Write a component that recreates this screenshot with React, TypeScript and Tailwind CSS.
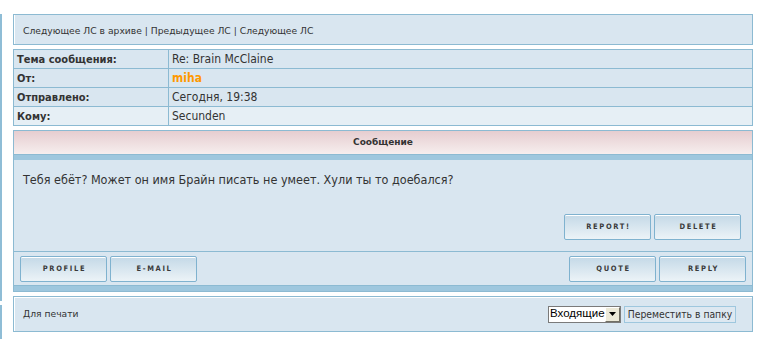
import React from "react";

// Classic forum private-message view
interface InfoRow {
  label: string;
  value: string;
  highlight?: boolean;
  light?: boolean;
}

const rows: InfoRow[] = [
  { label: "Тема сообщения:", value: "Re: Brain McClaine" },
  { label: "От:", value: "miha", highlight: true },
  { label: "Отправлено:", value: "Сегодня, 19:38" },
  { label: "Кому:", value: "Secunden", light: true },
];

const font = "font-['DejaVu_Sans',Verdana,sans-serif]";
const narrow = "font-['DejaVu_Sans_Condensed','DejaVu_Sans',Verdana,sans-serif]";

const ForumButton = ({ label }: { label: string }) => (
  <div className="w-[87px] h-[26px] flex items-center justify-center border border-[#7fb2cf] rounded-[2px] bg-gradient-to-b from-[#c4d9e7] to-[#ecf3f7] shadow-[inset_0_1px_0_#ffffff]">
    <span className={`text-[7.5px] font-bold tracking-[0.22em] text-[#3a3a3a] pl-[2px] ${narrow}`}>{label}</span>
  </div>
);

const App = () => {
  return (
    <div className={`flex w-[762px] h-[339px] bg-white text-[#333] ${font}`}>
      <div className="w-[2px] flex flex-col pt-[14px] gap-[4px]">
        <div className="h-[287px] bg-[#8fbdd6]"></div>
        <div className="flex-1 bg-[#8fbdd6]"></div>
      </div>

      <div className="ml-[11px] w-[740px] pt-[14px] flex flex-col">
        {/* navigation */}
        <div className="h-[31px] border border-[#8cbad2] bg-[#d9e6f0] shadow-[inset_1px_0_0_#ffffff] flex items-center pl-[9px] pt-[3px] text-[9.2px]">
          Следующее ЛС в архиве | Предыдущее ЛС | Следующее ЛС
        </div>

        {/* message info */}
        <table className={`mt-[4px] w-full border-collapse ${narrow}`}>
          <tbody>
            {rows.map((row) => (
              <tr key={row.label} className={row.light ? "bg-[#e6eff5]" : "bg-[#d9e6f0]"}>
                <td className="w-[155px] h-[19px] border border-[#8cbad2] pl-[3px] text-[11px] font-bold text-[#333] leading-none">
                  {row.label}
                </td>
                <td className="border border-[#8cbad2] pl-[3px] text-[12px] leading-none">
                  {row.highlight ? (
                    <span className="font-bold text-[#ff9900]">{row.value}</span>
                  ) : (
                    row.value
                  )}
                </td>
              </tr>
            ))}
          </tbody>
        </table>

        {/* message */}
        <div className="mt-[4px] border border-[#8cbad2] bg-[#d9e6f0] flex flex-col">
          <div className="h-[23px] bg-gradient-to-b from-[#e6cdd0] to-[#f6eeee] flex items-center justify-center text-[9px] font-bold text-[#333]">
            Сообщение
          </div>
          <div className="h-[6px] bg-[#9ec7de] border-t border-[#8cbad2]"></div>
          <div className="h-[91px] flex flex-col px-[9px] pt-[12px]">
            <p className={`text-[12.5px] leading-[15px] ${narrow}`}>
              Тебя ебёт? Может он имя Брайн писать не умеет. Хули ты то доебался?
            </p>
            <div className="mt-auto mb-[11px] flex justify-end gap-[3px] pr-[2px]">
              <ForumButton label="REPORT!" />
              <ForumButton label="DELETE" />
            </div>
          </div>
          <div className="border-t border-[#8cbad2] h-[34px] flex items-center justify-between pl-[6px] pr-[6px]">
            <div className="flex gap-[3px]">
              <ForumButton label="PROFILE" />
              <ForumButton label="E-MAIL" />
            </div>
            <div className="flex gap-[3px]">
              <ForumButton label="QUOTE" />
              <ForumButton label="REPLY" />
            </div>
          </div>
          <div className="h-[6px] bg-[#9ec7de] border-t border-[#8cbad2]"></div>
        </div>

        {/* bottom bar */}
        <div className="mt-[4px] h-[36px] border border-[#8cbad2] bg-[#d9e6f0] shadow-[inset_1px_1px_0_#ffffff] flex items-center justify-between pl-[9px] pr-[16px]">
          <span className="text-[9.2px]">Для печати</span>
          <div className="flex items-center gap-[3px]">
            <div className="h-[17px] w-[73px] flex items-center border border-[#7a7a7a] bg-white">
              <span className="flex-1 text-[11.5px] text-black leading-none pl-[1px] font-['Liberation_Sans',Arial,sans-serif]">Входящие</span>
              <div className="w-[15px] h-[15px] bg-[#ece9d8] border border-t-white border-l-white border-r-[#716f64] border-b-[#716f64] flex items-center justify-center">
                <svg width="7" height="4" viewBox="0 0 7 4">
                  <path d="M0 0 H7 L3.5 4 Z" fill="#000" />
                </svg>
              </div>
            </div>
            <div className={`h-[17px] w-[112px] flex items-center justify-center whitespace-nowrap border border-[#9ec7de] bg-[#dde8f1] text-[10.3px] text-[#333] leading-none ${narrow}`}>
              Переместить в папку
            </div>
          </div>
        </div>
      </div>
    </div>
  );
};

export default App;
